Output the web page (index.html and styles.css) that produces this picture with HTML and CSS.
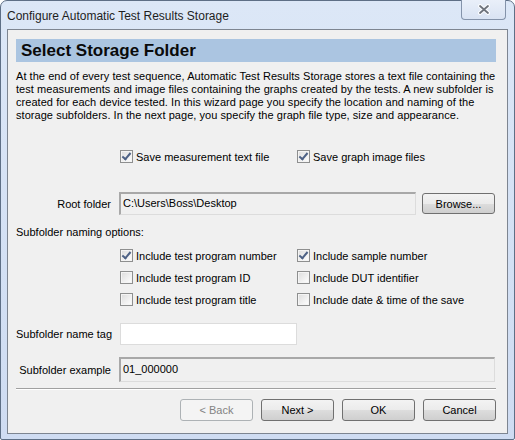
FILE: index.html
```html
<!DOCTYPE html>
<html>
<head>
<meta charset="utf-8">
<link rel="stylesheet" href="styles.css">
</head>
<body>
<div class="window">
  <div class="titlebar">
    <span class="title">Configure Automatic Test Results Storage</span>
    <div class="close">
      <svg width="14" height="11" viewBox="0 0 14 11"><path d="M3 2 L11 9 M11 2 L3 9" stroke="#fbfcfe" stroke-width="4" stroke-linecap="round"/><path d="M3 2 L11 9 M11 2 L3 9" stroke="#6e737c" stroke-width="1.8" stroke-linecap="round"/></svg>
    </div>
  </div>
  <div class="panel">
    <div class="header">Select Storage Folder</div>
    <p class="intro">At the end of every test sequence, Automatic Test Results Storage stores a text file containing the<br>test measurements and image files containing the graphs created by the tests. A new subfolder is<br>created for each device tested. In this wizard page you specify the location and naming of the<br>storage subfolders. In the next page, you specify the graph file type, size and appearance.</p>

    <div class="checks top">
      <label class="cb"><span class="box on"></span>Save measurement text file</label>
      <label class="cb"><span class="box on"></span>Save graph image files</label>
    </div>

    <div class="row root">
      <span class="lbl">Root folder</span>
      <div class="field ro wide">C:\Users\Boss\Desktop</div>
      <button class="btn">Browse...</button>
    </div>

    <div class="section">Subfolder naming options:</div>

    <div class="checks grid">
      <label class="cb"><span class="box on"></span>Include test program number</label>
      <label class="cb"><span class="box on"></span>Include sample number</label>
      <label class="cb"><span class="box"></span>Include test program ID</label>
      <label class="cb"><span class="box"></span>Include DUT identifier</label>
      <label class="cb"><span class="box"></span>Include test program title</label>
      <label class="cb"><span class="box"></span>Include date &amp; time of the save</label>
    </div>

    <div class="row tag">
      <span class="lbl">Subfolder name tag</span>
      <div class="field edit"></div>
    </div>

    <div class="row example">
      <span class="lbl">Subfolder example</span>
      <div class="field ro full">01_000000</div>
    </div>

    <div class="sep"></div>

    <div class="buttons">
      <button class="btn disabled">&lt; Back</button>
      <button class="btn">Next &gt;</button>
      <button class="btn">OK</button>
      <button class="btn">Cancel</button>
    </div>
  </div>
</div>
</body>
</html>
```
FILE: styles.css
```css
html, body {
  margin: 0;
  padding: 0;
  width: 515px;
  height: 440px;
  overflow: hidden;
  background: #ffffff;
}
.window {
  box-sizing: border-box;
  width: 515px;
  height: 440px;
  border: 1px solid #5e6f86;
  border-radius: 7px 7px 2px 2px;
  background: linear-gradient(to bottom, #dce7f7 0%, #d3e0f4 60%, #cfdcf2 100%);
  display: flex;
  flex-direction: column;
  font-family: "Liberation Sans", Arial, sans-serif;
}
.titlebar {
  height: 28px;
  position: relative;
  display: flex;
  align-items: center;
}
.title {
  margin-left: 6px;
  margin-top: 1px;
  font-size: 12px;
  color: #1e1e1e;
}
.close {
  position: absolute;
  right: 8px;
  top: -1px;
  width: 45px;
  height: 20px;
  box-sizing: border-box;
  border: 1px solid #8493aa;
  border-top: none;
  border-radius: 0 0 4px 4px;
  background: linear-gradient(to bottom, #e9eff9, #d9e3f3);
  display: flex;
  align-items: center;
  justify-content: center;
}
.panel {
  flex: 1;
  margin: 0 6px 5px 6px;
  border: 1px solid #7d8591;
  background: #f0f0f0;
  padding: 9px 11px 0 8px;
  font-size: 11px;
  color: #000;
}
.header {
  height: 23px;
  background: #abc5e1;
  font-size: 17px;
  font-weight: bold;
  line-height: 23px;
  padding-left: 5px;
  color: #0a0a0a;
}
.intro {
  margin: 8px 0 0 0;
  line-height: 13px;
  white-space: nowrap;
  letter-spacing: 0.05px;
}
.checks {
  display: grid;
  grid-template-columns: 177px 177px;
  margin-left: 104px;
}
.checks.top {
  margin-top: 28px;
}
.checks.grid {
  margin-top: 11px;
  row-gap: 9px;
}
.cb {
  display: flex;
  align-items: center;
  height: 13px;
  white-space: nowrap;
}
.box {
  box-sizing: border-box;
  width: 13px;
  height: 13px;
  border: 1px solid #8e8f8f;
  background: linear-gradient(135deg, #dcdcdc, #ffffff);
  box-shadow: inset 0 0 0 1px #f4f4f4;
  margin-right: 3px;
  flex: none;
  position: relative;
}
.box.on::after {
  content: "";
  position: absolute;
  left: 3px;
  top: 0px;
  width: 3px;
  height: 7px;
  border: solid #4d6185;
  border-width: 0 2px 2px 0;
  transform: rotate(40deg);
}
.row {
  display: flex;
  align-items: center;
}
.lbl {
  width: 95px;
  text-align: right;
  flex: none;
  margin-right: 8px;
  white-space: nowrap;
}
.root {
  margin-top: 29px;
}
.field {
  box-sizing: border-box;
  height: 22px;
  line-height: 20px;
  padding-left: 2px;
  border: 1px solid #acacac;
}
.field.ro {
  background: #f0f0f0;
  border-color: #a8a8a8 #dcdcdc #dcdcdc #a8a8a8;
}
.field.wide {
  width: 297px;
  border-width: 2px 1px 1px 2px;
  line-height: 19px;
  height: 23px;
}
.field.edit {
  width: 177px;
  background: #ffffff;
  border-color: #dcdcdc;
  margin-left: 1px;
}
.field.full {
  width: 376px;
  height: 25px;
  border-width: 2px 1px 1px 2px;
  line-height: 21px;
}
.btn {
  box-sizing: border-box;
  width: 73px;
  height: 22px;
  border: 1px solid #707070;
  border-radius: 3px;
  background: linear-gradient(to bottom, #f3f3f3 0%, #ebebeb 50%, #dddddd 51%, #cfcfcf 100%);
  font-family: "Liberation Sans", Arial, sans-serif;
  font-size: 11px;
  color: #000;
  padding: 0;
}
.btn.disabled {
  border-color: #adb2b5;
  background: #f4f4f4;
  color: #838383;
}
.root .btn {
  margin-left: 6px;
  height: 21px;
}
.section {
  margin-top: 11px;
}
.tag {
  margin-top: 17px;
}
.example {
  margin-top: 12px;
}
.sep {
  margin-top: 6px;
  height: 1px;
  background: #a0a0a0;
  border-bottom: 1px solid #ffffff;
}
.buttons {
  display: flex;
  justify-content: flex-end;
  gap: 8px;
  margin-top: 9px;
}
```
